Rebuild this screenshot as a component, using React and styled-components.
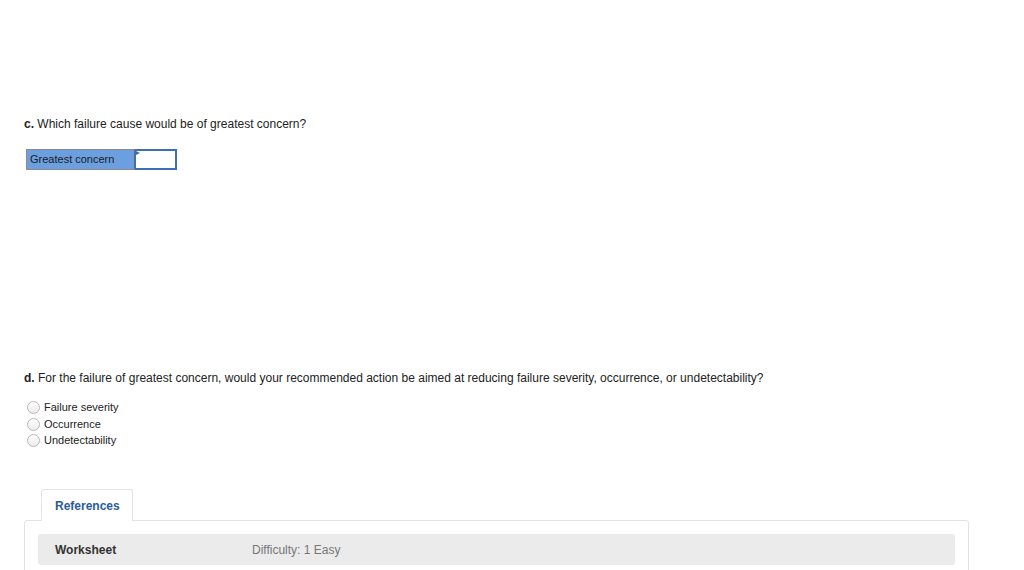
import styled, { createGlobalStyle } from "styled-components";

const GlobalStyle = createGlobalStyle`
  html, body {
    margin: 0;
    padding: 0;
    background: #fff;
  }
  body {
    font-family: "Liberation Sans", Arial, sans-serif;
    color: #222;
  }
`;

const Page = styled.div`
  width: 1024px;
  height: 570px;
  overflow: hidden;
  padding: 116px 24px 0 24px;
  box-sizing: border-box;
`;

const Question = styled.div`
  font-size: 12px;
  line-height: 16px;
  color: #222;
  b {
    font-weight: bold;
  }
`;

const Part = styled.div`
  margin-top: ${(p) => p.$top || 0}px;
`;

const Dropdown = styled.div`
  display: flex;
  margin-top: 17px;
  margin-left: 2px;
  width: 151px;
  height: 21px;
  box-sizing: border-box;
  border: 1px solid #8a8a8a;
  border-right: none;
`;

const DropLabel = styled.div`
  width: 108px;
  background: #6b9fe0;
  color: #1c1c1c;
  font-size: 11px;
  line-height: 19px;
  padding-left: 3px;
  box-sizing: border-box;
  border-right: 1px solid #666;
`;

const DropInput = styled.div`
  position: relative;
  flex: 1;
  background: #fff;
  border: 2px solid #3d6fb8;
  border-left: 1px solid #3d6fb8;
  margin-top: -1px;
  margin-bottom: -1px;
  &::before {
    content: "";
    position: absolute;
    left: 0;
    top: 0;
    border-left: 4px solid #3d6fb8;
    border-top: 2px solid transparent;
    border-bottom: 2px solid transparent;
  }
`;

const Options = styled.div`
  margin-top: 15px;
  display: flex;
  flex-direction: column;
  gap: 3.5px;
`;

const Option = styled.label`
  display: flex;
  align-items: center;
  gap: 4px;
  padding-left: 3px;
  font-size: 11px;
  line-height: 13px;
  color: #222;
`;

const Radio = styled.span`
  width: 11px;
  height: 11px;
  border-radius: 50%;
  border: 1px solid #b8b8b8;
  background: linear-gradient(#fdfdfd, #ececec);
  flex-shrink: 0;
`;

const RefBlock = styled.div`
  margin-top: 42px;
`;

const Tab = styled.div`
  margin-left: 17px;
  width: 92px;
  height: 32px;
  box-sizing: border-box;
  border: 1px solid #e3e3e3;
  border-bottom: none;
  border-radius: 3px 3px 0 0;
  background: #fff;
  color: #2b5c98;
  font-size: 12px;
  font-weight: bold;
  padding-left: 13px;
  line-height: 33px;
  position: relative;
  z-index: 1;
  margin-bottom: -1px;
`;

const Panel = styled.div`
  width: 945px;
  height: 80px;
  box-sizing: border-box;
  border: 1px solid #e3e3e3;
  border-radius: 3px;
  padding: 13px 13px;
`;

const Row = styled.div`
  display: flex;
  align-items: center;
  height: 31px;
  background: #ebebeb;
  border-radius: 3px;
  padding-left: 17px;
  font-size: 12px;
`;

const RowTitle = styled.div`
  width: 197px;
  font-weight: bold;
  color: #333;
`;

const RowMeta = styled.div`
  color: #777;
`;

export default function App() {
  return (
    <>
      <GlobalStyle />
      <Page>
        <Part>
          <Question>
            <b>c.</b> Which failure cause would be of greatest concern?
          </Question>
          <Dropdown>
            <DropLabel>Greatest concern</DropLabel>
            <DropInput />
          </Dropdown>
        </Part>
        <Part $top={200}>
          <Question>
            <b>d.</b> For the failure of greatest concern, would your recommended
            action be aimed at reducing failure severity, occurrence, or
            undetectability?
          </Question>
          <Options>
            <Option>
              <Radio />
              Failure severity
            </Option>
            <Option>
              <Radio />
              Occurrence
            </Option>
            <Option>
              <Radio />
              Undetectability
            </Option>
          </Options>
        </Part>
        <RefBlock>
          <Tab>References</Tab>
          <Panel>
            <Row>
              <RowTitle>Worksheet</RowTitle>
              <RowMeta>Difficulty: 1 Easy</RowMeta>
            </Row>
          </Panel>
        </RefBlock>
      </Page>
    </>
  );
}
